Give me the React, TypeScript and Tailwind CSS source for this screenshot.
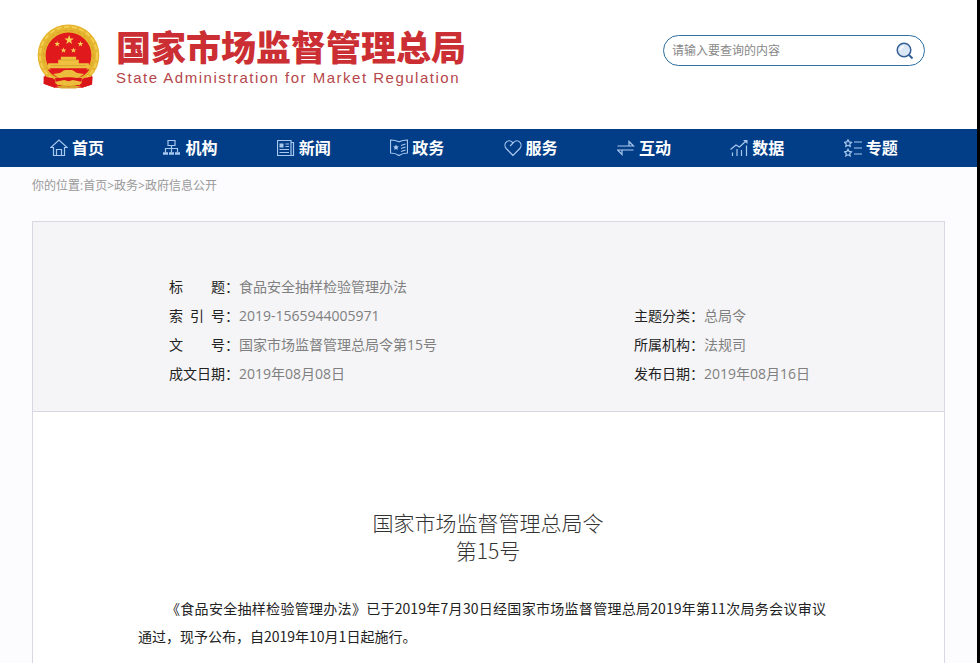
import React from 'react';

interface NavItem {
    label: string;
    icon: React.ReactNode;
}

interface InfoField {
    label: string;
    value: string;
    wide?: boolean;
}

const navItems: NavItem[] = [
    {
        label: '首页',
        icon: (
            <>
                <path d="M3.500 8.500H.8L9 1l8.200 7.500h-2.700v8h-11Z" />
                <path d="M6.500 16.500v-6h5v6" />
            </>
        ),
    },
    {
        label: '机构',
        icon: (
            <>
                <path d="M5 1.500h7v5H5ZM8.500 6.500v7M2.500 13.500v-4h12v4" />
                <path d="M0 14.500h5M6 14.500h5M12 14.500h5" strokeWidth="2.500" />
            </>
        ),
    },
    {
        label: '新闻',
        icon: (
            <>
                <path d="M.5 1.500h13.500v15H.5ZM14 3.500h2.500v13H14" />
                <path d="M8.500 5H12M8.500 7.500H12M2.500 10.500H12M2.500 13.500H12" />
                <path d="M2.500 4.500h4v4h-4Z" fill="currentColor" stroke="none" />
            </>
        ),
    },
    {
        label: '政务',
        icon: (
            <>
                <path d="M.5 1c3.500 0 6 .5 8.500 1.800C11.500 1.500 14 1 17.500 1v13c-3.500 0-6 .8-8.500 2.500C6.500 14.800 4 14 .5 14Z" />
                <path d="M11 6.500l4.500-1.500M11 9.500l4.500-1.500M11 12.500l4.500-1.500" />
                <path d="m6 5.500.9 1.800 2 .3-1.500 1.400.4 2L6 10l-1.800 1 .4-2-1.500-1.400 2-.3Z" fill="currentColor" stroke="none" />
            </>
        ),
    },
    {
        label: '服务',
        icon: (
            <>
                <path d="M9 16.500 2.200 9.500C.6 7.700.6 4.800 2.200 3.100c1.800-1.900 4.400-1.700 6 0L9 4l.9-.9c1.600-1.700 4.200-1.900 5.900 0 1.600 1.700 1.600 4.600 0 6.400Z" />
                <path d="M9 4 6 7.200" />
            </>
        ),
    },
    {
        label: '互动',
        icon: (
            <>
                <path d="M.5 7h16L12 2.500V7" />
                <path d="M16.500 11h-16L5 15.500V11" />
            </>
        ),
    },
    {
        label: '数据',
        icon: (
            <>
                <path d="M.5 10.500 6 6l3.500 2L16 2" />
                <path d="M13 1h4.500v4Z" fill="currentColor" stroke="none" />
                <path d="M2.500 17v-3.500M7 17v-7M11.500 17v-6M16.500 17V6.500" />
            </>
        ),
    },
    {
        label: '专题',
        icon: (
            <>
                <path d="m4 .8 1.100 2.100 2.400.4-1.700 1.700.4 2.400L4 6.300 1.800 7.400l.4-2.400L.5 3.300l2.400-.4ZM4 10.300l1.100 2.100 2.400.4-1.700 1.700.4 2.400L4 15.800l-2.200 1.100.4-2.400-1.700-1.700 2.400-.4Z" />
                <path d="M10 3h8M10 9h8M10 15h8" />
            </>
        ),
    },
];

const infoFields: InfoField[] = [
    { label: '标题', value: '食品安全抽样检验管理办法', wide: true },
    { label: '索引号', value: '2019-1565944005971' },
    { label: '主题分类', value: '总局令' },
    { label: '文号', value: '国家市场监督管理总局令第15号' },
    { label: '所属机构', value: '法规司' },
    { label: '成文日期', value: '2019年08月08日' },
    { label: '发布日期', value: '2019年08月16日' },
];

const STAR = 'M0-10 2.500-3.200 9.500-3.200 3.900 1.200 5.900 8 0 3.900-5.900 8-3.900 1.200-9.500-3.200-2.500-3.200Z';

const Emblem: React.FC = () => (
    <svg viewBox="50 40 190 195" className="h-[65px] w-[63px] shrink-0" role="img" aria-label="国徽">
        {/* Drapes */}
        <path d="M76 176 70 220l34 12h82l30-10-2-46Z" fill="#e0191c" />
        {/* Wreath */}
        <circle cx="145" cy="134" r="81" fill="#e0191c" stroke="#e6b52f" strokeWidth="24" />
        <circle cx="145" cy="134" r="86" fill="none" stroke="#f3cd50" strokeWidth="6" strokeDasharray="16 7" />
        <circle cx="145" cy="134" r="75" fill="none" stroke="#d39a26" strokeWidth="2" strokeDasharray="12 9" />
        {/* Stars */}
        <g fill="#f6cf55">
            <path d={STAR} transform="translate(147 88) scale(1.500)" />
            <path d={STAR} transform="translate(111 100) scale(.9)" />
            <path d={STAR} transform="translate(181 100) scale(.9)" />
            <path d={STAR} transform="translate(130 119) scale(.9)" />
            <path d={STAR} transform="translate(160 119) scale(.9)" />
        </g>
        {/* Gate */}
        <path d="M122 138h46v9h8v11h30l2 15H82l2-15h30v-11h8Z" fill="#efc03f" />
        <path d="M118 148h54M92 165h106" stroke="#c68a20" strokeWidth="1.500" />
        {/* Gear and ribbons */}
        <path d="M82 177h126c-8 12-18 20-30 24l-16-4-17 6-17-6-16 4c-12-4-22-12-30-24Z" fill="#e0191c" />
        <path d="M98 190l20-3c6 0 10-9 18-9h18c8 0 12 9 18 9l20 3-14 10h-66Z" fill="#ecbc3c" />
        <path d="M70 198l26 4 10 6-2 24-34-12ZM218 198l-26 4-8 6 2 24 30-10Z" fill="#d9151a" />
        <path d="M104 202h82l-4 14-22-3-15 6-15-6-22 3Z" fill="#d9151a" />
        <path d="M106 214l26-6 13 4 13-4 26 6-6 10-20-4-13 6-13-6-20 4Z" fill="#ecbc3c" />
        <path d="M108 228l22-4 15 4 15-4 22 4-14 6h-46Z" fill="#d9a22c" />
    </svg>
);

const Header: React.FC = () => (
    <header className="flex h-[129px] items-start justify-between bg-white pl-[37px] pr-[52px]">
        <a href="#" className="mt-6 flex items-start gap-4">
            <Emblem />
            <span className="mt-[5px] block">
                <span className="block font-['Liberation_Sans','Noto_Sans_CJK_SC',sans-serif] text-[35px] font-black leading-10 text-[#cb2f33]">
                    国家市场监督管理总局
                </span>
                <span className="block font-['Liberation_Sans',sans-serif] text-[15px] leading-[17px] tracking-widest text-[#b5474b]">
                    State Administration for Market Regulation
                </span>
            </span>
        </a>
        <form className="mt-[35px] flex h-[31px] w-[262px] items-center rounded-full border border-[#2f6f9f] bg-white pl-2 pr-[10px]">
            <input
                type="text"
                aria-label="查询内容"
                placeholder="请输入要查询的内容"
                className="min-w-0 flex-1 bg-transparent text-xs text-[#555] outline-none placeholder:text-[#888]"
            />
            <button type="button" aria-label="搜索">
                <svg viewBox="0 0 18 18" className="h-[18px] w-[18px]" fill="none" stroke="#335f96">
                    <circle cx="8" cy="8" r="6.800" fill="#dbe7f4" strokeWidth="1.500" />
                    <path d="M4.500 8A3.500 3.500 0 0 1 8 4.500" stroke="#fff" strokeWidth="1.500" />
                    <path d="m12.500 12.500 4 4" strokeWidth="2" />
                </svg>
            </button>
        </form>
    </header>
);

const Nav: React.FC = () => (
    <nav className="grid h-[38px] grid-cols-8 items-center bg-[#023e88] pl-[50px] pr-5">
        {navItems.map((item) => (
            <a key={item.label} href="#" className="flex items-center gap-1 text-base font-bold text-white">
                <svg
                    viewBox="0 0 18 18"
                    className="h-[18px] w-[18px] text-[#a9c8ee]"
                    fill="none"
                    stroke="currentColor"
                    strokeWidth="1.200"
                >
                    {item.icon}
                </svg>
                {item.label}
            </a>
        ))}
    </nav>
);

const InfoPanel: React.FC = () => (
    <dl className="grid grid-cols-[3fr_2fr] border-b border-[#d9d8e2] bg-[#f5f5f7] pb-[23px] pl-34 pt-[50px] text-sm leading-[29px]">
        {infoFields.map((field) => (
            <div key={field.label} className={field.wide ? 'col-span-2 flex' : 'flex'}>
                <dt className="flex text-[#222]">
                    <span className="block w-14 [text-align-last:justify]">{field.label}</span>：
                </dt>
                <dd className="text-[#808080]">{field.value}</dd>
            </div>
        ))}
    </dl>
);

const App: React.FC = () => {
    return (
        <div className="flex min-h-screen flex-col border-r-[3px] border-black bg-[#fcfbfe] font-['Open_Sans','Noto_Sans_CJK_SC',sans-serif]">
            <Header />
            <Nav />
            <main className="flex flex-1 flex-col px-8">
                <div className="pb-[26px] pt-[10px] text-xs leading-[18px] text-[#999]">
                    你的位置:<a href="#">首页</a>&gt;<a href="#">政务</a>&gt;<a href="#">政府信息公开</a>
                </div>
                <div className="flex-1 border-x border-t border-[#d9d8e2] bg-white">
                    <InfoPanel />
                    <article className="pl-[105px] pr-[118px] pt-24 font-['Noto_Sans_CJK_SC',sans-serif] leading-7">
                        <h1 className="pl-3 text-center text-[21px] font-light leading-7 text-[#333]">
                            国家市场监督管理总局令
                            <br />
                            第15号
                        </h1>
                        <p className="mt-[30px] text-justify indent-[28px] text-sm leading-7 text-[#222]">
                            《食品安全抽样检验管理办法》已于2019年7月30日经国家市场监督管理总局2019年第11次局务会议审议通过，现予公布，自2019年10月1日起施行。
                        </p>
                    </article>
                </div>
            </main>
        </div>
    );
};

export default App;
